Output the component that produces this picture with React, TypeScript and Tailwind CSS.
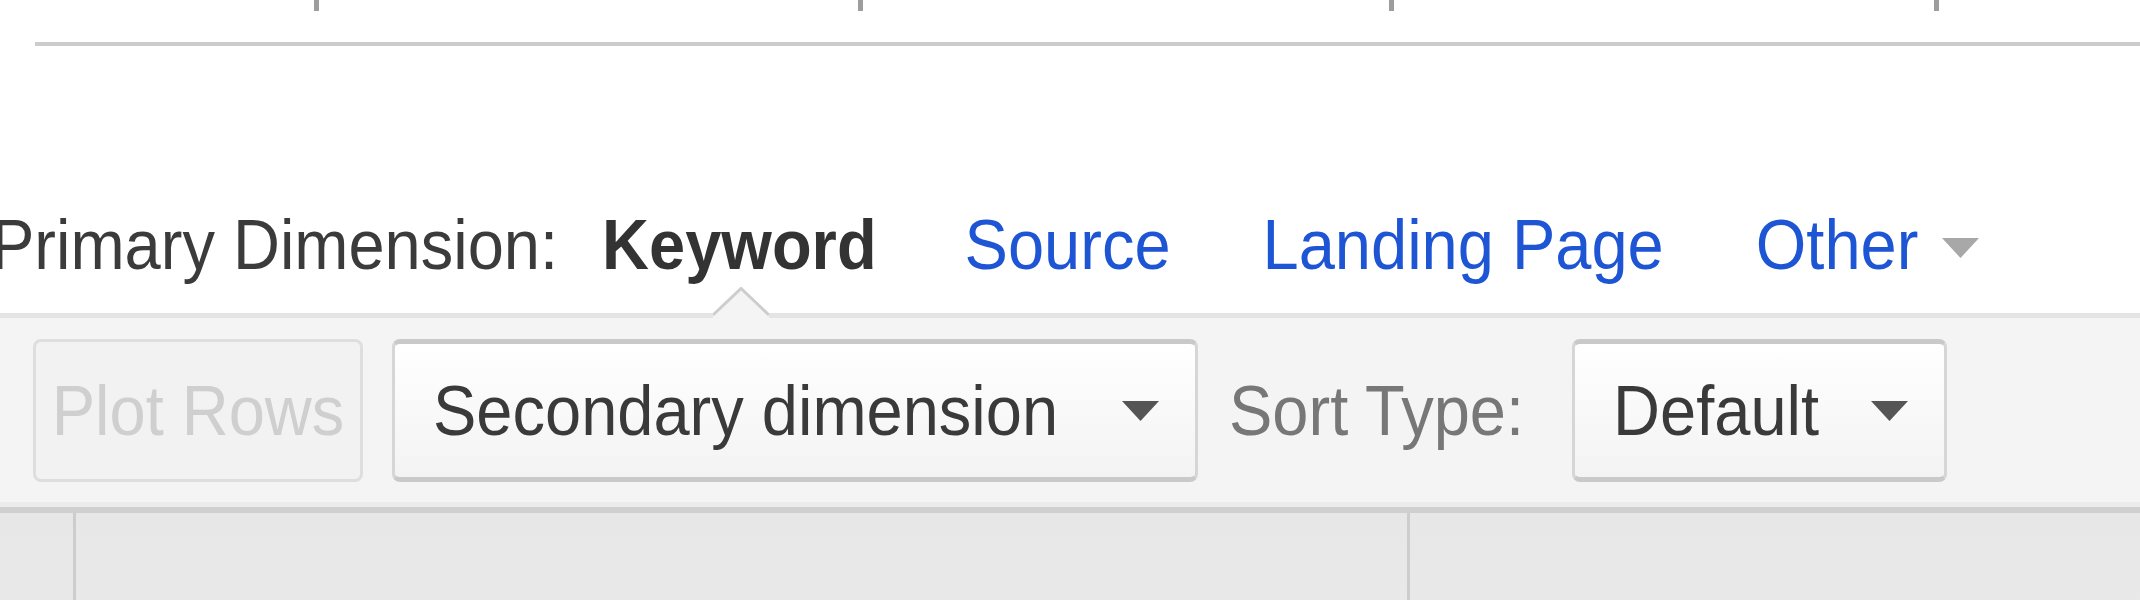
const TICKS = [314, 858, 1389, 1934];

// the shot is slightly stretched vertically, so the letters are too
const TALL = 'inline-block origin-center scale-y-[1.08]';

function Caret({ color }: { color: string }) {
  return (
    <svg width="37" height="20" viewBox="0 0 37 20" className="shrink-0">
      <polygon points="0,0 37,0 18.5,20" fill={color} />
    </svg>
  );
}

function AxisTicks() {
  return (
    <svg width="2140" height="42" className="block">
      {TICKS.map((x) => (
        <rect key={x} x={x} y={0} width={5} height={11} fill="#9d9d9d" />
      ))}
    </svg>
  );
}

export default function App() {
  return (
    <div className="w-[2140px] h-[600px] overflow-hidden bg-white font-['Liberation_Sans',Arial,sans-serif] text-[65px] leading-none">
      <AxisTicks />
      <div className="ml-[35px] h-[4px] bg-[#cccccc]" />

      {/* dimension switcher */}
      <div className="h-[267px] flex items-end pb-[36px] whitespace-nowrap">
        <span className={`ml-[-9px] text-[#3b3b3b] ${TALL}`}>Primary Dimension:</span>
        <span className={`ml-[44px] font-bold text-[#333] ${TALL}`}>Keyword</span>
        <span className={`ml-[88px] text-[#1d55d4] ${TALL}`}>Source</span>
        <span className={`ml-[92px] text-[#1d55d4] ${TALL}`}>Landing Page</span>
        <span className={`ml-[92px] text-[#1d55d4] ${TALL}`}>Other</span>
        <span className="ml-[24px] mb-[19px]">
          <Caret color="#a8a8a8" />
        </span>
      </div>

      {/* toolbar */}
      <div className="relative border-t-[5px] border-[#e4e4e4] bg-[#f4f4f4]">
        <svg width="56" height="31" viewBox="0 0 56 31" className="absolute left-[713px] top-[-31px]">
          <polygon points="0,31 0,27 28,1 56,27 56,31" fill="#f4f4f4" />
          <polyline points="0,28 28,1.5 56,28" fill="none" stroke="#cdcdcd" strokeWidth="3" />
        </svg>

        <div className="flex items-center h-[184px] pt-[1px] whitespace-nowrap">
          <button className="ml-[33px] w-[330px] h-[143px] rounded-[8px] border-[3px] border-[#dedede] bg-[#f2f2f2] text-[#cfcfcf]">
            <span className={TALL}>Plot Rows</span>
          </button>
          <button className="ml-[29px] w-[806px] h-[143px] rounded-[8px] border-x-[3px] border-y-[5px] border-x-[#d6d6d6] border-y-[#c9c9c9] bg-gradient-to-b from-white to-[#f3f3f3] text-[#3a3a3a] flex items-center pl-[38px] pr-[36px]">
            <span className="flex-1 text-left">
              <span className={TALL}>Secondary dimension</span>
            </span>
            <Caret color="#555" />
          </button>
          <span className={`ml-[31px] text-[#777] ${TALL}`}>Sort Type:</span>
          <button className="ml-[48px] w-[375px] h-[143px] rounded-[8px] border-x-[3px] border-y-[5px] border-x-[#d6d6d6] border-y-[#c9c9c9] bg-gradient-to-b from-white to-[#f3f3f3] text-[#3a3a3a] flex items-center pl-[38px] pr-[36px]">
            <span className="flex-1 text-left">
              <span className={TALL}>Default</span>
            </span>
            <Caret color="#555" />
          </button>
        </div>
        <div className="h-[5px] bg-[#ececec]" />
        <div className="h-[6px] bg-[#cfcfcf]" />
      </div>

      {/* table header */}
      <div className="flex h-[100px] bg-gradient-to-b from-[#e7e7e7] to-[#e9e9e9]">
        <div className="w-[76px] border-r-[3px] border-[#cdcdcd]" />
        <div className="w-[1334px] border-r-[3px] border-[#cdcdcd]" />
        <div className="flex-1" />
      </div>
    </div>
  );
}
